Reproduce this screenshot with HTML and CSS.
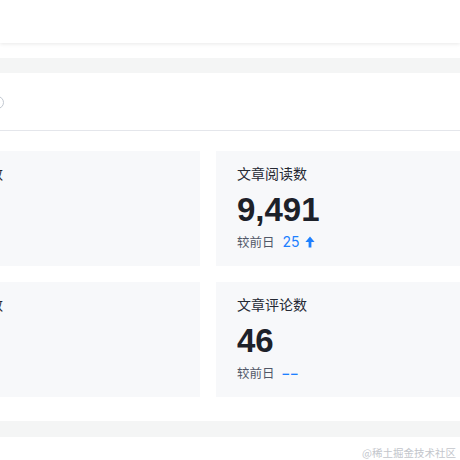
FILE: index.html
```html
<!DOCTYPE html>
<html lang="zh">
<head>
<meta charset="utf-8">
<link rel="stylesheet" href="styles.css">
</head>
<body>
<div class="page">
  <header class="topbar"></header>
  <div class="band band-top"></div>
  <section class="toolbar">
    <span class="help-icon"></span>
  </section>
  <div class="grid">
    <div class="card">
      <div class="card-title">文章展现数</div>
      <div class="card-num">12</div>
      <div class="card-sub">较前日</div>
    </div>
    <div class="card">
      <div class="card-title">文章阅读数</div>
      <div class="card-num">9,491</div>
      <div class="card-sub">较前日 <span class="delta">25</span><svg class="arrow" width="10" height="12" viewBox="0 0 10 12"><path d="M5 0.5 L9.6 6 L6.4 6 L6.4 11.5 L3.6 11.5 L3.6 6 L0.4 6 Z" fill="#1e80ff"/></svg></div>
    </div>
    <div class="card">
      <div class="card-title">文章点赞数</div>
      <div class="card-num">8</div>
      <div class="card-sub">较前日</div>
    </div>
    <div class="card">
      <div class="card-title">文章评论数</div>
      <div class="card-num">46</div>
      <div class="card-sub">较前日 <span class="delta dash">––</span></div>
    </div>
  </div>
  <div class="band band-bottom"></div>
  <footer class="watermark">@稀土掘金技术社区</footer>
</div>
</body>
</html>
```
FILE: styles.css
```css
html, body {
  margin: 0;
  padding: 0;
  background: #ffffff;
  overflow: hidden;
}
body {
  width: 460px;
  height: 460px;
  font-family: Inter, "Noto Sans CJK SC", sans-serif;
}
.page {
  display: flex;
  flex-direction: column;
  height: 460px;
}
.topbar {
  height: 43px;
  background: #ffffff;
  box-shadow: 0 1px 4px rgba(0, 0, 0, 0.09);
  position: relative;
  z-index: 1;
}
.band {
  background: #f4f5f5;
  height: 15px;
}
.band-top {
  margin-top: 15px;
}
.toolbar {
  height: 57px;
  border-bottom: 1px solid #e4e6eb;
  display: flex;
  align-items: center;
}
.help-icon {
  width: 11px;
  height: 11px;
  border: 1px solid #c2c8d1;
  border-radius: 50%;
  margin-left: -9px;
  margin-top: 1px;
}
.grid {
  margin-top: 20px;
  margin-left: -88px;
  display: grid;
  grid-template-columns: 288px 288px;
  column-gap: 16px;
  row-gap: 16px;
}
.card {
  background: #f7f8fa;
  height: 115px;
  box-sizing: border-box;
  padding: 11px 21px 0;
}
.card-title {
  font-family: "Noto Sans CJK SC", sans-serif;
  font-size: 14px;
  line-height: 22px;
  color: #252933;
}
.card-num {
  margin-top: 6px;
  font-family: "Liberation Sans", Arial, sans-serif;
  font-weight: 700;
  font-size: 33px;
  line-height: 40px;
  color: #1d2129;
}
.card-sub {
  margin-top: 2px;
  font-family: "Noto Sans CJK SC", sans-serif;
  font-size: 12.5px;
  line-height: 20px;
  color: #515767;
  display: flex;
  align-items: center;
}
.delta {
  margin-left: 8px;
  font-family: Inter, sans-serif;
  font-size: 14px;
  color: #1e80ff;
}
.dash {
  font-size: 13px;
  font-weight: 600;
  letter-spacing: 2px;
  color: #1e80ff;
}
.arrow {
  margin-left: 5px;
}
.band-bottom {
  margin-top: 24px;
  height: 16px;
}
.watermark {
  margin-top: 9px;
  text-align: right;
  padding-right: 4px;
  font-family: "Noto Sans CJK SC", sans-serif;
  font-size: 10.5px;
  line-height: 14px;
  color: #c3c6cc;
}
```
